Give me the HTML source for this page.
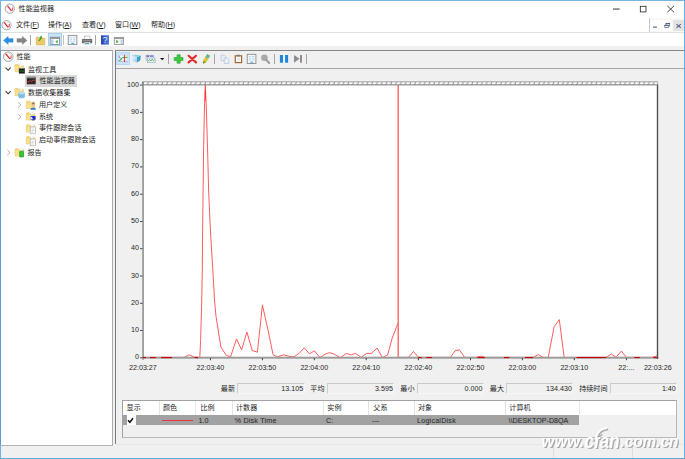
<!DOCTYPE html>
<html><head><meta charset="utf-8">
<style>
*{margin:0;padding:0;box-sizing:border-box}
html,body{width:685px;height:459px;overflow:hidden;background:#fff}
body{position:relative;font-family:"Liberation Sans","Noto Sans CJK SC",sans-serif;font-size:7.08px;color:#1e1e1e;line-height:1}
.a{position:absolute}
.t{position:absolute;white-space:nowrap;line-height:10px;height:10px}
.r{text-align:right}
.c{text-align:center}
.n{font-size:7.15px;color:#262626}
.sep{position:absolute;width:1px;background:#a6a6a6}
.box{position:absolute;height:11px;top:382.5px;border:1px solid #f7f7f7;border-top-color:#c9c9c9;border-left-color:#cdcdcd;background:#f0f0f0}
.hs{position:absolute;top:401px;width:1px;height:14px;background:#e4e4e4}
</style></head><body>
<!-- window frame -->

<!-- title -->
<div class="t" style="left:18.6px;top:4.4px;font-size:7.1px">性能监视器</div>
<!-- menu -->
<div class="t" style="left:16px;top:20.4px">文件(<u>F</u>)</div>
<div class="t" style="left:48px;top:20.4px">操作(<u>A</u>)</div>
<div class="t" style="left:82px;top:20.4px">查看(<u>V</u>)</div>
<div class="t" style="left:115px;top:20.4px">窗口(<u>W</u>)</div>
<div class="t" style="left:151px;top:20.4px">帮助(<u>H</u>)</div>
<div class="a" style="left:1px;top:32px;width:683px;height:1px;background:#e0e0e0"></div>
<!-- mdi controls -->
<div class="a" style="left:649px;top:18px;width:35px;height:14px;background:#f8f8f8;border-left:1px solid #cacaca"></div>
<div class="a" style="left:650.8px;top:20.4px;width:10px;height:10.2px;background:#fff"></div>
<div class="a" style="left:662px;top:20.4px;width:10.2px;height:10.2px;background:#fff"></div>
<div class="a" style="left:673px;top:20.4px;width:11px;height:10.2px;background:#e3e3e3"></div>
<!-- gray base under toolbar -->
<div class="a" style="left:1px;top:46px;width:683px;height:412px;background:#f0f0f0"></div>
<!-- main toolbar selected btn -->
<div class="a" style="left:48px;top:33px;width:14px;height:13px;background:#cce4f7;border:1px solid #a8d2f3"></div>
<div class="sep" style="left:30px;top:34.5px;height:10.5px"></div>
<div class="sep" style="left:62.7px;top:34.5px;height:10.5px;background:#c4c4c4"></div>
<div class="sep" style="left:95px;top:34.5px;height:10.5px"></div>
<!-- tree pane -->
<div class="a" style="left:1px;top:50px;width:112px;height:395.5px;background:#fff;border-top:1px solid #9c9ca2;border-right:1px solid #acacb2;border-bottom:1px solid #b2b2b8"></div>
<div class="a" style="left:25.3px;top:75.3px;width:52px;height:11.3px;background:#d9d9d9"></div>
<div class="t" style="left:16.5px;top:52px">性能</div>
<div class="t" style="left:28px;top:64.5px">监视工具</div>
<div class="t" style="left:39.5px;top:76px">性能监视器</div>
<div class="t" style="left:28px;top:87.7px">数据收集器集</div>
<div class="t" style="left:39px;top:99.7px">用户定义</div>
<div class="t" style="left:39px;top:112px">系统</div>
<div class="t" style="left:39px;top:123px">事件跟踪会话</div>
<div class="t" style="left:39px;top:135.4px">启动事件跟踪会话</div>
<div class="t" style="left:27.5px;top:148px">报告</div>
<!-- splitter gap -->
<div class="a" style="left:113px;top:50px;width:2px;height:395px;background:#f1f1f1"></div>
<!-- right pane -->
<div class="a" style="left:115px;top:50px;width:569px;height:394px;background:#f0f0f0;border-top:1.9px solid #868686;border-left:1px solid #7c7c7c"></div>
<div class="a" style="left:116px;top:68px;width:568px;height:1px;background:#a4a4a4"></div>
<div class="a" style="left:116px;top:52px;width:14px;height:12.7px;background:#cce4f7;border:1px solid #b4d8f5"></div>
<div class="sep" style="left:168px;top:53.5px;height:10.5px"></div>
<div class="sep" style="left:214px;top:53.5px;height:10.5px"></div>
<div class="sep" style="left:274px;top:53.5px;height:10.5px"></div>
<div class="sep" style="left:306px;top:53.5px;height:10.5px"></div>
<!-- chart hatch strip -->
<svg class="a" style="left:0;top:0" width="685" height="459" viewBox="0 0 685 459">
<rect x="143" y="84" width="515" height="274" fill="#fff"/>
<g fill="none" stroke="#ff4a4a" stroke-width="0.9" stroke-linejoin="miter">
<polyline points="143.0,357.4 147.0,357.4 184.0,357.4 189.2,354.8 194.5,357.2 199.8,357.4 200.6,340.4 201.6,306.4 202.3,270.0 202.6,230.0 203.6,150.0 204.4,110.0 205.3,84.0 206.4,110.0 207.6,150.0 208.6,190.0 210.4,230.0 212.8,270.0 214.5,300.0 216.0,316.4 220.9,347.1 226.3,355.3 230.6,356.8 236.5,338.9 241.6,349.9 246.9,332.1 252.3,350.6 257.4,352.2 262.4,305.1 268.0,329.9 273.1,354.8 277.6,356.8 283.5,354.8 288.9,356.3 294.0,356.8 299.0,353.4 304.3,347.8 309.4,353.8 314.5,350.9 319.9,357.6 325.2,354.1 329.6,352.6 334.7,354.4 340.4,357.6 346.4,353.4 350.7,354.9 355.5,353.4 361.2,357.4 366.5,353.4 371.3,353.4 377.2,348.1 382.3,357.6 387.7,354.8 392.1,338.4 398.0,323.1"/>
<polyline points="398.0,357.4 408.7,357.4 413.4,351.4 418.4,357.4 450.4,357.4 455.0,350.8 459.4,349.8 464.7,357.4 476.0,357.4 480.7,356.2 485.5,357.4 533.0,357.4 538.4,354.6 543.0,357.4 548.2,357.4 554.1,326.8 559.3,319.6 564.2,357.4 606.0,357.4 611.3,354.1 616.0,357.2 621.4,351.1 626.4,357.4 652.0,357.4 657.0,355.8"/>
</g>
<line x1="398.2" y1="85" x2="398.2" y2="357" stroke="#ff5a5a" stroke-width="1.3"/>
<line x1="205.3" y1="90" x2="205.3" y2="101" stroke="#ff1010" stroke-width="0.7"/>
<rect x="142.2" y="84" width="1.75" height="275.8" fill="#9a9a9a"/>
<rect x="142.2" y="356.7" width="516" height="2" fill="#9c9c9c"/>
<rect x="656.8" y="84" width="1.4" height="275" fill="#505050"/>
<rect x="142.9" y="356.95" width="3.1" height="1.15" fill="#c80000"/>
<rect x="150" y="356.95" width="5.8" height="1.15" fill="#c80000"/>
<rect x="161" y="356.95" width="11" height="1.15" fill="#c80000"/>
<rect x="194.5" y="356.95" width="3.5" height="1.15" fill="#c80000"/>
<rect x="418.4" y="356.95" width="3.3" height="1.15" fill="#c80000"/>
<rect x="426.3" y="356.95" width="5.5" height="1.15" fill="#c80000"/>
<rect x="477.5" y="356.95" width="7.3" height="1.15" fill="#c80000"/>
<rect x="504" y="356.95" width="5.3" height="1.15" fill="#c80000"/>
<rect x="525" y="356.95" width="8" height="1.15" fill="#c80000"/>
<rect x="576.6" y="356.95" width="29.5" height="1.15" fill="#c80000"/>
<rect x="634.4" y="356.95" width="5.2" height="1.15" fill="#c80000"/>
<rect x="653.4" y="356.95" width="3.4" height="1.15" fill="#c80000"/>
<rect x="140" y="357.3" width="2.6" height="1" fill="#4a4a4a"/>
<rect x="140" y="330.0" width="2.6" height="1" fill="#4a4a4a"/>
<rect x="140" y="302.8" width="2.6" height="1" fill="#4a4a4a"/>
<rect x="140" y="275.5" width="2.6" height="1" fill="#4a4a4a"/>
<rect x="140" y="248.2" width="2.6" height="1" fill="#4a4a4a"/>
<rect x="140" y="221.0" width="2.6" height="1" fill="#4a4a4a"/>
<rect x="140" y="193.7" width="2.6" height="1" fill="#4a4a4a"/>
<rect x="140" y="166.4" width="2.6" height="1" fill="#4a4a4a"/>
<rect x="140" y="139.1" width="2.6" height="1" fill="#4a4a4a"/>
<rect x="140" y="111.9" width="2.6" height="1" fill="#4a4a4a"/>
<rect x="140" y="84.6" width="2.6" height="1" fill="#4a4a4a"/>
<rect x="210.0" y="358" width="1" height="2.2" fill="#444"/>
<rect x="261.9" y="358" width="1" height="2.2" fill="#444"/>
<rect x="313.8" y="358" width="1" height="2.2" fill="#444"/>
<rect x="365.7" y="358" width="1" height="2.2" fill="#444"/>
<rect x="417.9" y="358" width="1" height="2.2" fill="#444"/>
<rect x="470.0" y="358" width="1" height="2.2" fill="#444"/>
<rect x="521.9" y="358" width="1" height="2.2" fill="#444"/>
<rect x="573.8" y="358" width="1" height="2.2" fill="#444"/>
<rect x="625.9" y="358" width="1" height="2.2" fill="#444"/>
</svg>
<svg class="a" style="left:142px;top:81px" width="516" height="5" viewBox="0 0 516 5"><defs><pattern id="ht" width="4.77" height="5" patternUnits="userSpaceOnUse"><path d="M1.2,3.35L2.2,1.3H6L5,3.35Z" fill="#fff"/><path d="M-3.57,3.35L-2.57,1.3H1.23L0.23,3.35Z" fill="#fff"/></pattern></defs><rect x="0" y="0.5" width="516" height="3.9" fill="#848484"/><rect x="1.5" y="0" width="514" height="5" fill="url(#ht)"/></svg>

<div class="t r n" style="left:110px;width:29px;top:352.3px">0</div>
<div class="t r n" style="left:110px;width:29px;top:325.0px">10</div>
<div class="t r n" style="left:110px;width:29px;top:297.8px">20</div>
<div class="t r n" style="left:110px;width:29px;top:270.5px">30</div>
<div class="t r n" style="left:110px;width:29px;top:243.2px">40</div>
<div class="t r n" style="left:110px;width:29px;top:216.0px">50</div>
<div class="t r n" style="left:110px;width:29px;top:188.7px">60</div>
<div class="t r n" style="left:110px;width:29px;top:161.4px">70</div>
<div class="t r n" style="left:110px;width:29px;top:134.1px">80</div>
<div class="t r n" style="left:110px;width:29px;top:106.9px">90</div>
<div class="t r n" style="left:110px;width:29px;top:79.6px">100</div>

<div class="t c n" style="left:122.9px;width:40px;top:362.5px">22:03:27</div>
<div class="t c n" style="left:190.4px;width:40px;top:362.5px">22:03:40</div>
<div class="t c n" style="left:242.4px;width:40px;top:362.5px">22:03:50</div>
<div class="t c n" style="left:294.3px;width:40px;top:362.5px">22:04:00</div>
<div class="t c n" style="left:346.2px;width:40px;top:362.5px">22:04:10</div>
<div class="t c n" style="left:398.4px;width:40px;top:362.5px">22:02:40</div>
<div class="t c n" style="left:450.5px;width:40px;top:362.5px">22:02:50</div>
<div class="t c n" style="left:502.4px;width:40px;top:362.5px">22:03:00</div>
<div class="t c n" style="left:554.3px;width:40px;top:362.5px">22:03:10</div>
<div class="t c n" style="left:606.2px;width:40px;top:362.5px">22:...</div>
<div class="t c n" style="left:637.8px;width:40px;top:362.5px">22:03:26</div>

<!-- stats -->
<div class="t" style="left:220.8px;top:384px">最新</div>
<div class="box" style="left:237px;width:67.5px"></div>
<div class="t r n" style="left:250px;width:53.2px;top:384px">13.105</div>
<div class="t" style="left:310.3px;top:384px">平均</div>
<div class="box" style="left:327px;width:67.3px"></div>
<div class="t r n" style="left:340px;width:52.9px;top:384px">3.595</div>
<div class="t" style="left:400.3px;top:384px">最小</div>
<div class="box" style="left:417px;width:67px"></div>
<div class="t r n" style="left:430px;width:52.4px;top:384px">0.000</div>
<div class="t" style="left:489.8px;top:384px">最大</div>
<div class="box" style="left:506px;width:67px"></div>
<div class="t r n" style="left:520px;width:51.9px;top:384px">134.430</div>
<div class="t" style="left:579.2px;top:384px">持续时间</div>
<div class="box" style="left:610px;width:66.5px"></div>
<div class="t r n" style="left:620px;width:55.8px;top:384px">1:40</div>
<!-- legend -->
<div class="a" style="left:122px;top:400px;width:555px;height:38px;border:1px solid #a2a2a2;border-right-color:#b8b8b8;border-bottom-color:#b8b8b8;background:#f0f0f0"></div>
<div class="a" style="left:123px;top:401px;width:553px;height:14.3px;background:#fff"></div>
<div class="a" style="left:123px;top:415.3px;width:455.8px;height:10.2px;background:#a2a2a2"></div>
<div class="a" style="left:126.6px;top:415.3px;width:9.4px;height:10.2px;background:#fff"></div>
<div class="hs" style="left:159.3px"></div><div class="hs" style="left:195.2px"></div><div class="hs" style="left:232px"></div><div class="hs" style="left:323.4px"></div><div class="hs" style="left:368.4px"></div><div class="hs" style="left:414.3px"></div><div class="hs" style="left:505.3px"></div><div class="hs" style="left:578.6px"></div>
<div class="t" style="left:126.6px;top:403px">显示</div>
<div class="t" style="left:163px;top:403px">颜色</div>
<div class="t" style="left:200.5px;top:403px">比例</div>
<div class="t" style="left:236px;top:403px">计数器</div>
<div class="t" style="left:327.3px;top:403px">实例</div>
<div class="t" style="left:373.3px;top:403px">父系</div>
<div class="t" style="left:418px;top:403px">对象</div>
<div class="t" style="left:509.3px;top:403px">计算机</div>
<div class="a" style="left:161.7px;top:419.8px;width:31.8px;height:1px;background:#e8383c"></div>
<div class="t n" style="left:198.5px;top:415.6px">1.0</div>
<div class="t n" style="left:234.7px;top:415.6px;letter-spacing:0.2px">% Disk Time</div>
<div class="t n" style="left:326px;top:415.6px">C:</div>
<div class="t n" style="left:372px;top:415.6px">---</div>
<div class="t n" style="left:417px;top:415.6px;letter-spacing:0.22px">LogicalDisk</div>
<div class="t n" style="left:508.6px;top:415.6px">\\DESKTOP-D8QA</div>
<!-- status bar -->
<div class="a" style="left:116px;top:444px;width:568px;height:1px;background:#e6e6e6"></div>
<div class="a" style="left:1px;top:445.5px;width:683px;height:13px;background:#f0f0f0"></div>
<div class="a" style="left:0;top:0;width:685px;height:1px;background:#78b7df"></div>
<div class="a" style="left:0;top:0;width:1px;height:459px;background:#72b2de"></div>
<div class="a" style="left:0;top:50px;width:1px;height:395px;background:#5a9cd2"></div>
<div class="a" style="left:683.85px;top:0;width:1.15px;height:459px;background:#68aede"></div>
<div class="a" style="left:0;top:457.7px;width:685px;height:1.3px;background:#5ca9dc"></div>
<div class="a" style="left:553px;top:446px;width:1px;height:11.5px;background:#dedede"></div>
<div class="a" style="left:632px;top:446px;width:1px;height:11.5px;background:#dedede"></div>
<svg class="a" style="left:0;top:0" width="685" height="459" viewBox="0 0 685 459" font-family="Liberation Sans, sans-serif">
<defs>
<g id="perf"><circle cx="0" cy="0" r="4.6" fill="#fcfcfc" stroke="#9c9c9c" stroke-width="0.9"/><circle cx="0" cy="0" r="3.5" fill="none" stroke="#dfe6e2" stroke-width="0.6"/><path d="M-2.1,-2.5L1.2,1.6" fill="none" stroke="#e22c2c" stroke-width="1.3" stroke-linecap="round"/><path d="M1.2,1.6L2.7,1.5L2.8,-1.2" fill="none" stroke="#e43a3a" stroke-width="0.9" stroke-linejoin="round"/></g>
<g id="fold"><path d="M0,1 L0.6,0.2 L3,0.2 L3.7,1.1 L8.3,1.1 L8.3,7.5 L0,7.5 Z" fill="#f4d97c" stroke="#dcb650" stroke-width="0.5"/><rect x="4.6" y="0.2" width="3" height="1.6" fill="#fff" stroke="#ddd" stroke-width="0.3"/><rect x="0.3" y="2.2" width="7.8" height="5.1" fill="#f7e08e"/></g>
<g id="doc"><rect x="0" y="0" width="5.4" height="6.8" fill="#fff" stroke="#a0a0a0" stroke-width="0.6"/><path d="M1.2,2.2h3M1.2,3.6h3M1.2,5h2" stroke="#b5b5b5" stroke-width="0.5"/></g>
<g id="prop"><rect x="0" y="0" width="8.7" height="9.2" fill="#f3f7fb" stroke="#8d8d8d" stroke-width="0.9"/><path d="M1.6,2.2h2.2M4.8,2.2h2.4M1.6,4h2.2M4.8,4h2.4M1.6,5.8h2.2M4.8,5.8h2.4" stroke="#bcd3ea" stroke-width="0.9"/><rect x="3" y="7.4" width="3" height="1.1" fill="#38b4e6"/></g>
<linearGradient id="hg" x1="0" y1="0" x2="1" y2="0"><stop offset="0" stop-color="#2443a8"/><stop offset="1" stop-color="#4f7fe6"/></linearGradient>
<linearGradient id="cg" x1="0" y1="0" x2="1" y2="1"><stop offset="0" stop-color="#f6fbfe"/><stop offset="1" stop-color="#8fcde6"/></linearGradient>
</defs>
<!-- app icons -->
<use href="#perf" x="9.8" y="8.7"/>
<use href="#perf" x="6.5" y="25.2"/>
<use href="#perf" transform="translate(8.2,56.7) scale(1.04)"/>
<!-- window controls -->
<rect x="613" y="8.6" width="6.6" height="0.9" fill="#1c1c1c"/>
<rect x="640.3" y="6.3" width="5.7" height="5.6" fill="none" stroke="#222" stroke-width="0.8"/>
<path d="M667.3,5.9L674,12.2M674,5.9L667.3,12.2" stroke="#222" stroke-width="0.8"/>
<!-- mdi -->
<rect x="653" y="26.6" width="3.9" height="1" fill="#3c4e72"/>
<rect x="666" y="23.3" width="3.7" height="2.6" fill="none" stroke="#4c5e80" stroke-width="0.7"/><rect x="665.7" y="23" width="4.3" height="0.9" fill="#4c5e80"/>
<rect x="664.8" y="25.2" width="3.5" height="2.3" fill="#fff" stroke="#4c5e80" stroke-width="0.7"/><rect x="664.5" y="24.9" width="4.1" height="0.9" fill="#4c5e80"/>
<path d="M676.5,24.1L680.8,27.8M680.8,24.1L676.5,27.8" stroke="#4e6084" stroke-width="1.05"/>
<!-- main toolbar -->
<path d="M3.4,40.4L8.2,36.3V38.6H13.1V42.2H8.2V44.5Z" fill="#2c90e6" stroke="#1f7ad0" stroke-width="0.3"/>
<path d="M27.1,40.4L22.3,36.3V38.6H16.9V42.2H22.3V44.5Z" fill="#868686" stroke="#777" stroke-width="0.3"/>
<path d="M36.2,37.2H38.8L39.6,38.2H44.8V45H36.2Z" fill="#ecca6c" stroke="#cfa748" stroke-width="0.5"/>
<path d="M38.4,40.8C39.8,40.2 40.8,39.2 41,37.4" fill="none" stroke="#3aa83a" stroke-width="1.3"/>
<path d="M39.2,37.9L41.1,35.6L42.6,38.4Z" fill="#3aa83a"/>
<rect x="50.2" y="37.2" width="9.4" height="7.3" fill="#fff" stroke="#7d858e" stroke-width="0.8"/>
<rect x="50.2" y="37.2" width="9.4" height="1.7" fill="#8a9099"/>
<rect x="50.9" y="39.4" width="2.6" height="4.6" fill="#b5d2ee"/>
<path d="M57.6,39.8V43.6L55.3,41.7Z" fill="#3cb43c"/>
<use href="#prop" x="68.2" y="35.4"/>
<rect x="84.4" y="36" width="5.6" height="3.4" fill="#fdfdfd" stroke="#9a9a9a" stroke-width="0.5"/>
<rect x="81.9" y="39" width="10.3" height="4.2" rx="0.6" fill="#6e6e6e"/>
<rect x="83" y="40" width="8" height="0.8" fill="#9a9a9a"/>
<rect x="84.2" y="42.2" width="6" height="2.4" fill="#f4f8ff" stroke="#9ab" stroke-width="0.4"/>
<rect x="85.2" y="43" width="1.6" height="0.9" fill="#3a9a3a"/><rect x="87.2" y="43" width="1.6" height="0.9" fill="#3a7ad8"/>
<rect x="101" y="35.3" width="8" height="9.3" fill="url(#hg)"/>
<text x="105" y="43.2" font-size="8.4" fill="#f4f6ff" text-anchor="middle">?</text>
<rect x="114.3" y="37.4" width="9.3" height="7.1" fill="#fff" stroke="#8a8a8a" stroke-width="0.8"/>
<rect x="114.3" y="37.4" width="9.3" height="1.7" fill="#9a9a9a"/>
<rect x="120.4" y="39.5" width="2.7" height="4.6" fill="#c2d9ef"/>
<path d="M116.2,39.8V43.6L118.6,41.7Z" fill="#3cb43c"/>
<!-- graph toolbar -->
<rect x="118.4" y="55" width="9.4" height="7" fill="#edf3fb" stroke="#b4caee" stroke-width="0.5"/>
<path d="M118.6,61.3H127.6" stroke="#8eaee4" stroke-width="0.7"/>
<path d="M118.9,55.6L120.3,58.8L121.2,59.8" stroke="#5c7cd2" stroke-width="0.8" fill="none"/>
<path d="M118.9,60.6L120.4,60.4L122,57.7L127.4,57.3" stroke="#3cb23c" stroke-width="1" fill="none"/>
<path d="M124.5,54.9V62.1" stroke="#e2452c" stroke-width="1.15"/>
<path d="M131.4,55.7L137,56.9V62.6L132.4,61Z" fill="url(#cg)"/><path d="M137,56.9L140.9,55.6L140.2,60.6L137,62.6Z" fill="#3f9fc4"/><path d="M131.4,55.7L135.4,54.8L140.9,55.6L137,56.9Z" fill="#8fd0e8"/>
<rect x="146" y="55.2" width="7.6" height="5" fill="#e4ebf7" stroke="#93a6cc" stroke-width="0.6"/>
<rect x="146.3" y="55.5" width="7" height="1.3" fill="#5b7fd4"/><rect x="147.4" y="55.5" width="1.5" height="1.3" fill="#e03a4a"/><rect x="149" y="55.5" width="0.9" height="1.3" fill="#e8eefa"/>
<rect x="147.5" y="58" width="7.6" height="4.7" fill="#eef6ee" stroke="#8fa3d0" stroke-width="0.6"/>
<path d="M148.2,61.4L149.6,59.6L150.8,61L152.2,59.2L153.4,60.8L154.6,59.8" stroke="#3aa83e" stroke-width="0.85" fill="none"/>
<path d="M160,58H164.4L162.2,60.2Z" fill="#1a1a1a"/>
<path d="M177.1,54.8H180.2V57.5H183V60.5H180.2V63.2H177.1V60.5H174.2V57.5H177.1Z" fill="#3cc840" stroke="#22a02a" stroke-width="0.6"/>
<path d="M188.6,55.8L196,62.4M196,55.8L188.6,62.4" stroke="#e32a2a" stroke-width="2.2" stroke-linecap="round"/>
<path d="M203,63.5L203.4,60.6L207.2,54.2L209.9,55.8L206,62.3Z" fill="#d6ca2c" stroke="#a89c20" stroke-width="0.3"/>
<path d="M205.6,57L207.2,54.2L209.9,55.8L208.2,58.6Z" fill="#5ab4b0"/>
<path d="M203.2,63.4L203.6,61L205.6,62.2Z" fill="#7a7420"/>
<path d="M221.1,55.2H224.3L225.8,56.7V60.6H221.1Z" fill="#e8eff8" stroke="#a9bad2" stroke-width="0.6"/>
<path d="M224.2,58H227.4L228.9,59.5V63.5H224.2Z" fill="#e8eff8" stroke="#a9bad2" stroke-width="0.6"/>
<rect x="235.3" y="55.8" width="6.3" height="6.8" fill="#fcfcfc" stroke="#a4642c" stroke-width="1.2"/>
<rect x="237" y="54.8" width="2.9" height="1.7" fill="#7a7a7a"/>
<path d="M236.8,58.2h3.4M236.8,59.6h3.4M236.8,61h3.4" stroke="#c8d6e6" stroke-width="0.6"/>
<use href="#prop" x="247.2" y="54.3"/>
<circle cx="264.4" cy="57.8" r="3.3" fill="#a9a9a9"/>
<path d="M266.4,60L269.2,63" stroke="#9e9e9e" stroke-width="2" stroke-linecap="round"/>
<rect x="279.9" y="55" width="3.1" height="7.7" fill="#1f84de"/><rect x="285.1" y="55" width="3" height="7.7" fill="#1f84de"/>
<path d="M294,55V62.7L299.6,58.85Z" fill="#8e8e8e"/><rect x="300" y="55" width="2" height="7.7" fill="#8e8e8e"/>
<!-- tree chevrons -->
<g fill="none" stroke="#3a3a3a" stroke-width="1.15">
<path d="M5.6,67.7L8.15,70.3L10.7,67.7"/><path d="M5.6,91.2L8.15,93.8L10.7,91.2"/></g>
<g fill="none" stroke="#a4a4a4" stroke-width="0.9">
<path d="M18.3,102.5L20.9,105L18.3,107.5"/><path d="M18.3,114.4L20.9,116.9L18.3,119.4"/><path d="M7.4,150L10,152.5L7.4,155"/></g>
<!-- folders -->
<use href="#fold" x="15" y="64.2"/><use href="#fold" x="15" y="88.1"/>
<use href="#fold" x="26.3" y="101"/><use href="#fold" x="26.3" y="112.6"/><use href="#fold" x="26.3" y="124.5"/><use href="#fold" x="26.3" y="136.4"/>
<use href="#fold" x="15.1" y="148.5"/>
<!-- overlays -->
<rect x="19" y="68.6" width="5.8" height="4.8" fill="#1c1c1c" stroke="#555" stroke-width="0.4"/><path d="M19.8,71.8L21.2,70.4L22.4,71.6L24,70.8" stroke="#3ad040" stroke-width="0.6" fill="none"/>
<path d="M18.6,93.2a3,1.1 0 0 1 6,0V97a3,1.1 0 0 1 -6,0Z" fill="#7cc0ea" stroke="#5aa4d6" stroke-width="0.4"/><ellipse cx="21.6" cy="93.2" rx="3" ry="1.1" fill="#b8e0f6"/>
<circle cx="33.2" cy="104.4" r="1.7" fill="#e6b48a"/><path d="M30.4,109.8C30.4,106.6 36,106.6 36,109.8Z" fill="#3a78c8"/><path d="M31.6,103.6a1.7,1.7 0 0 1 3.2,0Z" fill="#5a4030"/>
<rect x="30.6" y="116" width="5" height="3.8" fill="#1a2fc4"/><path d="M30.6,116L33,118.4L30.6,119.8Z" fill="#e8f0ff"/><rect x="32" y="120" width="2.6" height="0.9" fill="#9aa4b4"/>
<use href="#doc" x="30.2" y="127"/><use href="#doc" x="30.2" y="139"/>
<rect x="19.6" y="151.2" width="4" height="5.8" rx="0.5" fill="#34c634" stroke="#1c8e1c" stroke-width="0.6"/>
<!-- perf monitor icon -->
<rect x="26.8" y="76.8" width="8.9" height="7.5" fill="#262626"/><rect x="26.8" y="76.8" width="8.9" height="1.5" fill="#8a8a8a"/>
<path d="M27.4,81.6H29.4L30.4,80.4L31.6,81.4L32.8,80.2H35.2" stroke="#f04040" stroke-width="0.8" fill="none"/>
<path d="M27.4,83H35.2" stroke="#8a2a2a" stroke-width="0.5"/>
<!-- check -->
<path d="M128,420.2L129.9,422.3L132.9,418.3" fill="none" stroke="#111" stroke-width="1.5"/>
<!-- watermark -->
<g font-style="italic" font-weight="bold" style="filter:blur(0.3px)">
<g fill="#a9a9a9" transform="translate(1.3,1.2)">
<text x="541.6" y="447.3" font-size="15.8" textLength="42.5" lengthAdjust="spacingAndGlyphs">www.</text>
<text x="584.6" y="447.6" font-size="20" textLength="35" lengthAdjust="spacingAndGlyphs">cfan</text>
<text x="620.4" y="447.3" font-size="15.8" textLength="58" lengthAdjust="spacingAndGlyphs">.com.cn</text>
</g>
<g fill="#fdfdfd">
<text x="541.6" y="447.3" font-size="15.8" textLength="42.5" lengthAdjust="spacingAndGlyphs">www.</text>
<text x="584.6" y="447.6" font-size="20" textLength="35" lengthAdjust="spacingAndGlyphs">cfan</text>
<text x="620.4" y="447.3" font-size="15.8" textLength="58" lengthAdjust="spacingAndGlyphs">.com.cn</text>
</g>
<path d="M596.5,436.5C598,431 602,428.5 607,428.2" fill="none" stroke="#a9a9a9" stroke-width="1.8" transform="translate(1.2,1.1)"/>
<path d="M596.5,436.5C598,431 602,428.5 607,428.2" fill="none" stroke="#fdfdfd" stroke-width="1.8"/>
</g>
</svg>

</body></html>
